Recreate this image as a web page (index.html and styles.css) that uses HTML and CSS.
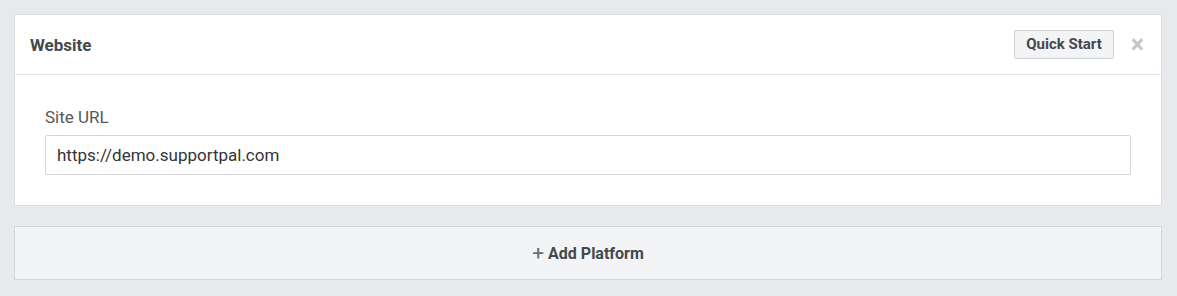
FILE: index.html
```html
<html>
<head>
    <link rel="stylesheet" href="styles.css">
</head>
<body>
    <div class="platform">
        <div class="platformHeader">
            <span class="platformTitle">Website</span>
            <a class="button" href="#">Quick Start</a>
            <a class="close" href="#">&times;</a>
        </div>
        <div class="platformBody">
            <label class="fieldLabel" for="siteUrl">Site URL</label>
            <input class="fieldInput" type="text" id="siteUrl" value="https://demo.supportpal.com">
        </div>
    </div>

    <a class="addPlatform" href="#"><span class="plus">+</span> Add Platform</a>
</body>
</html>
```

FILE: styles.css
```css
body {
    margin: 0;
    padding: 14px 15px 14px 14px;
    background-color: #e8e9ed;
    font-family: Roboto, "Liberation Sans", sans-serif;
    color: #4a4d52;
}

.platform {
    background-color: #ffffff;
    border: 1px solid #dcdde1;
}

.platformHeader {
    display: flex;
    align-items: center;
    height: 59px;
    padding: 0 17px 0 15px;
    border-bottom: 1px solid #e3e4e8;
}

.platformTitle {
    flex: 1;
    font-size: 17px;
    font-weight: bold;
    color: #45484d;
}

.button {
    border: 1px solid #cfd0d4;
    border-radius: 2px;
    padding: 0 11px;
    height: 27px;
    line-height: 27px;
    background-color: #f3f4f6;
    color: #45484d;
    font-size: 15px;
    font-weight: bold;
    text-decoration: none;
}

.close {
    margin-left: 17px;
    font-size: 25px;
    font-weight: bold;
    color: #c4c5c9;
    text-decoration: none;
    line-height: 1;
}

.platformBody {
    padding: 32px 30px 30px 30px;
}

.fieldLabel {
    display: block;
    font-size: 17px;
    color: #55585d;
    margin-bottom: 8px;
}

.fieldInput {
    display: block;
    box-sizing: border-box;
    width: 100%;
    height: 40px;
    padding: 0 11px;
    border: 1px solid #d6d7db;
    border-radius: 2px;
    font-family: Roboto, "Liberation Sans", sans-serif;
    font-size: 17px;
    color: #333538;
}

.addPlatform {
    display: flex;
    align-items: center;
    justify-content: center;
    margin-top: 20px;
    height: 52px;
    background-color: #f3f4f6;
    border: 1px solid #d4d5d9;
    color: #45484d;
    font-size: 16px;
    font-weight: bold;
    text-decoration: none;
}

.plus {
    font-size: 21px;
    font-weight: normal;
    color: #6a6d72;
    margin-right: 4px;
}
```
